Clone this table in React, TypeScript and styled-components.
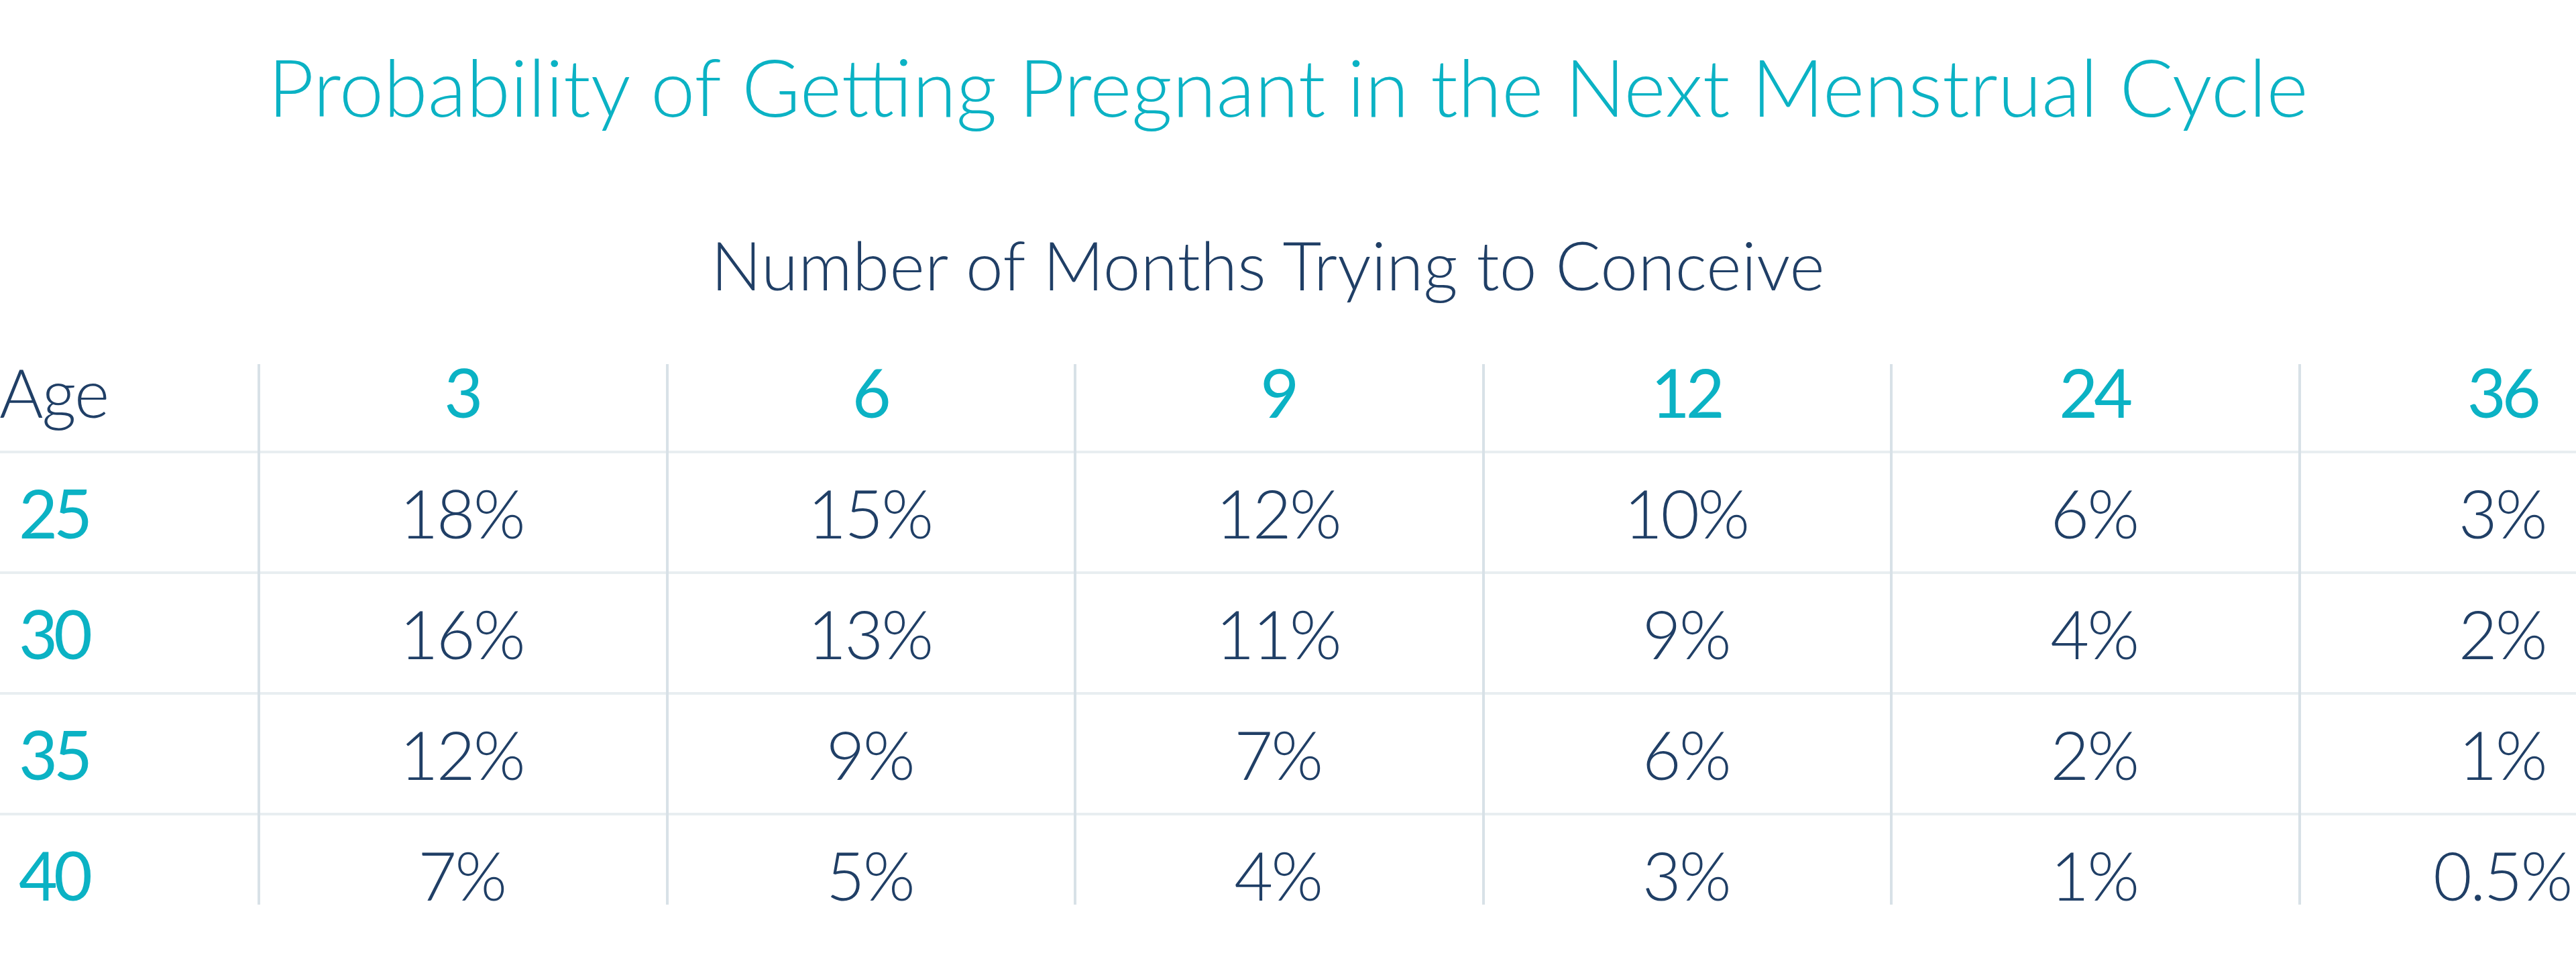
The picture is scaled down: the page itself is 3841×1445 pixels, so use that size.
import styled, { createGlobalStyle, css } from 'styled-components';

const CYAN = '#0bb2c4';
const NAVY = '#203f66';
const V_LINE = '#d8e1e7';
const H_LINE = '#e8eef1';

const Global = createGlobalStyle`
  html, body {
    margin: 0;
    background: #fff;
    overflow: hidden;
  }
  body {
    font-family: Lato, "Open Sans", sans-serif;
  }
`;

const Page = styled.main`
  display: flex;
  flex-direction: column;
  align-items: center;
  width: 3841px;
  height: 1445px;
  padding-top: 69px;
  box-sizing: border-box;
  overflow: hidden;
`;

const Title = styled.h1`
  margin: 0;
  font-size: 119px;
  line-height: 1;
  font-weight: 300;
  letter-spacing: 0;
  color: ${CYAN};
  white-space: nowrap;
`;

const Subtitle = styled.h2`
  margin: 156px 60px 0 0;
  font-size: 100px;
  line-height: 1;
  font-weight: 300;
  letter-spacing: 0.3px;
  color: ${NAVY};
  white-space: nowrap;
`;

const Table = styled.div`
  align-self: flex-start;
  display: grid;
  grid-template-columns: 384px repeat(6, 608.5px);
  grid-auto-rows: 180px;
  margin-top: 52px;
`;

type Edge = 'top' | 'mid' | 'bottom';

// vertical divider on the left of each data cell, inset 47px at the table's top and bottom
const vLine = (edge: Edge) => {
  const size = edge === 'mid' ? '100%' : 'calc(100% - 47px)';
  const top = edge === 'top' ? '47px' : '0';
  return `linear-gradient(${V_LINE}, ${V_LINE}) left 0 top ${top} / 4px ${size} no-repeat`;
};

const hLine = `linear-gradient(${H_LINE}, ${H_LINE}) left 0 bottom 0 / 100% 4px no-repeat`;

const Cell = styled.div<{ $edge: Edge; $first?: boolean; $accent?: boolean; $head?: boolean }>`
  display: flex;
  align-items: center;
  justify-content: center;
  box-sizing: border-box;
  padding-bottom: 4px;
  font-size: 100px;
  line-height: 1;
  white-space: nowrap;
  font-weight: ${(p) => (p.$accent ? 400 : 300)};
  letter-spacing: ${(p) => (p.$accent ? '-6px' : '-3px')};
  color: ${(p) => (p.$accent ? CYAN : NAVY)};
  ${(p) =>
    p.$first
      ? css`
          padding-right: 224px;
          background: ${p.$edge === 'bottom' ? 'none' : hLine};
        `
      : css`
          background: ${p.$edge === 'bottom' ? vLine(p.$edge) : `${vLine(p.$edge)}, ${hLine}`};
        `}
  ${(p) =>
    p.$head &&
    css`
      letter-spacing: -2px;
    `}
`;

const months = ['3', '6', '9', '12', '24', '36'];

const data: { age: string; values: string[] }[] = [
  { age: '25', values: ['18%', '15%', '12%', '10%', '6%', '3%'] },
  { age: '30', values: ['16%', '13%', '11%', '9%', '4%', '2%'] },
  { age: '35', values: ['12%', '9%', '7%', '6%', '2%', '1%'] },
  { age: '40', values: ['7%', '5%', '4%', '3%', '1%', '0.5%'] },
];

export default function App() {
  return (
    <>
      <Global />
      <Page>
        <Title>Probability of Getting Pregnant in the Next Menstrual Cycle</Title>
        <Subtitle>Number of Months Trying to Conceive</Subtitle>
        <Table>
          <Cell $edge="top" $first $head>
            Age
          </Cell>
          {months.map((m) => (
            <Cell key={m} $edge="top" $accent>
              {m}
            </Cell>
          ))}
          {data.map((row, i) => {
            const edge: Edge = i === data.length - 1 ? 'bottom' : 'mid';
            return [
              <Cell key={row.age} $edge={edge} $first $accent>
                {row.age}
              </Cell>,
              ...row.values.map((v, j) => (
                <Cell key={`${row.age}-${j}`} $edge={edge}>
                  {v}
                </Cell>
              )),
            ];
          })}
        </Table>
      </Page>
    </>
  );
}
